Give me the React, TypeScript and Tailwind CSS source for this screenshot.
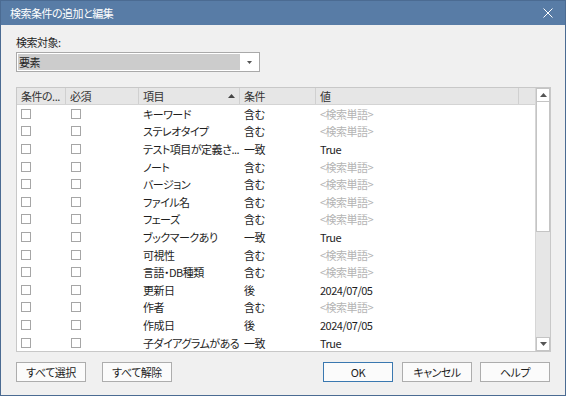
import React from "react";

// 検索条件の行データ
interface Row {
  item: string;
  cond: string;
  value: string;
  placeholder?: boolean;
}

const rows: Row[] = [
  { item: "キーワード", cond: "含む", value: "<検索単語>", placeholder: true },
  { item: "ステレオタイプ", cond: "含む", value: "<検索単語>", placeholder: true },
  { item: "テスト項目が定義さ...", cond: "一致", value: "True" },
  { item: "ノート", cond: "含む", value: "<検索単語>", placeholder: true },
  { item: "バージョン", cond: "含む", value: "<検索単語>", placeholder: true },
  { item: "ファイル名", cond: "含む", value: "<検索単語>", placeholder: true },
  { item: "フェーズ", cond: "含む", value: "<検索単語>", placeholder: true },
  { item: "ブックマークあり", cond: "一致", value: "True" },
  { item: "可視性", cond: "含む", value: "<検索単語>", placeholder: true },
  { item: "言語・DB種類", cond: "含む", value: "<検索単語>", placeholder: true },
  { item: "更新日", cond: "後", value: "2024/07/05" },
  { item: "作者", cond: "含む", value: "<検索単語>", placeholder: true },
  { item: "作成日", cond: "後", value: "2024/07/05" },
  { item: "子ダイアグラムがある", cond: "一致", value: "True" },
];

export default function App() {
  return (
    <div className="w-[566px] h-[396px] flex flex-col bg-[#f0f0f0] border border-[#4b6b92] text-[11px] tracking-[-0.5px] text-[#1e1e1e] overflow-hidden font-['Noto_Sans_CJK_JP','Noto_Sans',sans-serif] [font-feature-settings:'palt']">
      {/* ================= TITLE BAR ================= */}
      <div className="h-[24px] shrink-0 bg-[#587ca6] flex items-center justify-between pl-[9px] pr-[12px]">
        <span className="text-white text-[11px] leading-[16px] -mt-[1px]">検索条件の追加と編集</span>
        <svg width="10" height="10" viewBox="0 0 10 10" className="text-white">
          <path d="M0.5 0.5 L9.5 9.5 M9.5 0.5 L0.5 9.5" stroke="currentColor" strokeWidth="1" />
        </svg>
      </div>

      <div className="flex-1 flex flex-col px-[15px]">
        {/* ================= TARGET ================= */}
        <div className="mt-[9px] leading-[16px]">検索対象:</div>
        <div className="mt-[2px] w-[244px] h-[20px] border border-[#a9a9a9] bg-white flex p-[1px]">
          <div className="flex-1 bg-[#cccccc] flex items-center pl-[1px] leading-[16px]">要素</div>
          <div className="w-[18px] flex items-center justify-center">
            <svg width="5" height="3" viewBox="0 0 5 3">
              <path d="M0 0 H5 L2.5 3 Z" fill="#555" />
            </svg>
          </div>
        </div>

        {/* ================= TABLE ================= */}
        <div className="mt-[15px] w-[535px] h-[265px] border border-[#c8c8c8] bg-white flex">
          <div className="flex-1 flex flex-col">
            <div className="h-[17px] bg-[#e6e6e6] border-b border-[#d4d4d4] flex text-[#333]">
              <HeaderCell w="w-[49px]">条件の...</HeaderCell>
              <HeaderCell w="w-[73px]">必須</HeaderCell>
              <HeaderCell w="w-[101px]">
                <span className="flex-1">項目</span>
                <svg width="7" height="4" viewBox="0 0 7 4" className="mr-[4px]">
                  <path d="M0 4 H7 L3.5 0 Z" fill="#444" />
                </svg>
              </HeaderCell>
              <HeaderCell w="w-[76px]">条件</HeaderCell>
              <HeaderCell w="w-[203px]">値</HeaderCell>
              <div className="flex-1" />
            </div>
            <div className="flex-1 flex flex-col">
              {rows.map((r, i) => (
                <div key={i} className="h-[17.6px] flex items-center leading-[16px]">
                  <div className="w-[49px] pl-[4px]">
                    <Check />
                  </div>
                  <div className="w-[73px] pl-[5px]">
                    <Check />
                  </div>
                  <div className="w-[101px] pl-[4px] whitespace-nowrap overflow-hidden">{r.item}</div>
                  <div className="w-[76px] pl-[4px]">{r.cond}</div>
                  <div className={`w-[203px] pl-[4px] ${r.placeholder ? "text-[#b4b4b4]" : "text-[#1e1e1e]"}`}>
                    {r.value}
                  </div>
                </div>
              ))}
            </div>
          </div>

          {/* ================= SCROLLBAR ================= */}
          <div className="w-[15px] flex flex-col border-l border-[#d6d6d6] bg-[#e6e6e6]">
            <div className="h-[14px] bg-white border border-[#c4c4c4] flex items-center justify-center">
              <svg width="7" height="4" viewBox="0 0 7 4">
                <path d="M0 4 H7 L3.5 0 Z" fill="#555" />
              </svg>
            </div>
            <div className="h-[130px] bg-white border-x border-b border-[#c4c4c4]" />
            <div className="flex-1" />
            <div className="h-[14px] bg-white border border-[#c4c4c4] flex items-center justify-center">
              <svg width="7" height="4" viewBox="0 0 7 4">
                <path d="M0 0 H7 L3.5 4 Z" fill="#555" />
              </svg>
            </div>
          </div>
        </div>

        {/* ================= BUTTONS ================= */}
        <div className="mt-[10px] flex">
          <Btn className="">すべて選択</Btn>
          <Btn className="ml-[16px]">すべて解除</Btn>
          <Btn className="ml-[151px]" primary>
            OK
          </Btn>
          <Btn className="ml-[9px]">キャンセル</Btn>
          <Btn className="ml-[8px]">ヘルプ</Btn>
        </div>
      </div>
    </div>
  );
}

function HeaderCell({ w, children }: { w: string; children: React.ReactNode }) {
  return (
    <div className={`${w} border-r border-[#d0d0d0] flex items-center pl-[4px] leading-[16px] whitespace-nowrap overflow-hidden`}>
      {children}
    </div>
  );
}

function Check() {
  return <div className="w-[10px] h-[10px] border border-[#a6a6a6] bg-white" />;
}

function Btn({
  children,
  className,
  primary,
}: {
  children: React.ReactNode;
  className: string;
  primary?: boolean;
}) {
  return (
    <div
      className={`${className} w-[71px] h-[20px] flex items-center justify-center leading-[16px] bg-[#fbfbfb] border ${
        primary ? "border-[#3a78b0]" : "border-[#adadad]"
      }`}
    >
      {children}
    </div>
  );
}
